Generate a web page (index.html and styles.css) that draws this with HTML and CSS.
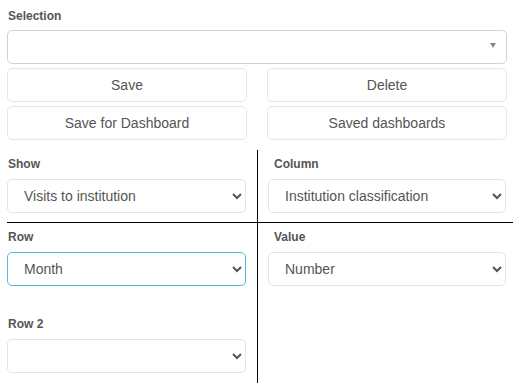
FILE: index.html
```html
<!DOCTYPE html>
<html lang="en">
<head>
    <meta charset="UTF-8">
    <meta name="viewport" content="width=device-width, initial-scale=1.0">
    <title>Pivot settings</title>
    <link rel="stylesheet" href="styles.css">
</head>
<body>
    <div class="top">
        <label class="field-label">Selection</label>
        <div class="selection-box">
            <span class="selection-arrow"></span>
        </div>

        <div class="button-grid">
            <button class="btn">Save</button>
            <button class="btn">Delete</button>
            <button class="btn">Save for Dashboard</button>
            <button class="btn">Saved dashboards</button>
        </div>
    </div>

    <div class="pivot-grid">
        <div class="cell cell-left cell-top">
            <label class="field-label">Show</label>
            <select class="form-select">
                <option>Visits to institution</option>
            </select>
        </div>
        <div class="cell cell-right cell-top">
            <label class="field-label">Column</label>
            <select class="form-select">
                <option>Institution classification</option>
            </select>
        </div>
        <div class="cell cell-left">
            <label class="field-label">Row</label>
            <select class="form-select focused">
                <option>Month</option>
            </select>

            <label class="field-label second">Row 2</label>
            <select class="form-select">
                <option></option>
            </select>
        </div>
        <div class="cell cell-right">
            <label class="field-label">Value</label>
            <select class="form-select">
                <option>Number</option>
            </select>
        </div>
    </div>
</body>
</html>
```

FILE: styles.css
```css
body {
    margin: 0;
    padding: 8px 0 0 7px;
    background: #fff;
    font-family: "Liberation Sans", Arial, sans-serif;
    color: #555;
}

.top {
    width: 500px;
}

.field-label {
    display: block;
    font-size: 12px;
    font-weight: bold;
    line-height: 16px;
    color: #555;
    margin: 0 0 6px 1px;
}

.selection-box {
    position: relative;
    box-sizing: border-box;
    height: 34px;
    border: 1px solid #cbd3dc;
    border-radius: 5px;
    background: #fff;
}

.selection-arrow {
    position: absolute;
    right: 10px;
    top: 12px;
    border-top: 5px solid #888;
    border-left: 3px solid transparent;
    border-right: 3px solid transparent;
}

.button-grid {
    display: grid;
    grid-template-columns: 240px 240px;
    column-gap: 20px;
    row-gap: 4px;
    margin-top: 4px;
}

.btn {
    box-sizing: border-box;
    height: 34px;
    background: #fff;
    border: 1px solid #e6e6e6;
    border-radius: 5px;
    font-family: "Liberation Sans", Arial, sans-serif;
    font-size: 14px;
    color: #555;
    cursor: pointer;
}

/* Show / Column / Row / Value layout */
.pivot-grid {
    display: grid;
    grid-template-columns: 251px 255px;
    margin-top: 10px;
}

.cell {
    padding: 6px 0 10px 0;
}

.cell-top {
    padding-bottom: 9px;
    border-bottom: 1px solid #000;
}

.cell-left {
    padding-right: 11px;
    border-right: 1px solid #000;
}

.cell-right {
    padding-left: 10px;
    padding-right: 7px;
}

.cell .field-label {
    margin-bottom: 7px;
}

.cell-right .field-label {
    margin-left: 6px;
}

.cell .field-label.second {
    margin-top: 30px;
}

.form-select {
    display: block;
    box-sizing: border-box;
    width: 100%;
    height: 34px;
    padding: 6px 12px;
    background: #fff;
    border: 1px solid #e4e4e4;
    border-radius: 5px;
    font-family: "Liberation Sans", Arial, sans-serif;
    font-size: 14px;
    color: #555;
    outline: none;
}

.form-select.focused {
    border-color: #5bb7db;
}
```
